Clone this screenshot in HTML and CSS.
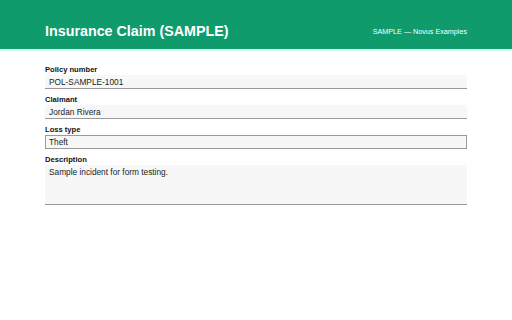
FILE: index.html
```html
<!DOCTYPE html>
<html lang="en">
<head>
    <meta charset="UTF-8">
    <meta name="viewport" content="width=device-width, initial-scale=1.0">
    <title>Insurance Claim (SAMPLE)</title>
    <link rel="stylesheet" href="styles.css">
</head>
<body>
    <header class="topbar">
        <h1>Insurance Claim (SAMPLE)</h1>
        <span class="meta">SAMPLE — Novus Examples</span>
    </header>

    <form class="claim-form">
        <div class="field">
            <label for="policy">Policy number</label>
            <input id="policy" type="text" value="POL-SAMPLE-1001">
        </div>
        <div class="field">
            <label for="claimant">Claimant</label>
            <input id="claimant" type="text" value="Jordan Rivera">
        </div>
        <div class="field">
            <label for="loss">Loss type</label>
            <div class="select-box" id="loss">Theft</div>
        </div>
        <div class="field">
            <label for="desc">Description</label>
            <textarea id="desc">Sample incident for form testing.</textarea>
        </div>
    </form>
</body>
</html>
```

FILE: styles.css
```css
* {
    margin: 0;
    padding: 0;
    box-sizing: border-box;
    font-family: "Liberation Sans", Arial, Helvetica, sans-serif;
}

body {
    background: #fff;
    color: #111;
}

.topbar {
    height: 51px;
    background: #0f9b6b;
    border-bottom: 2px solid #d4fbef;
    display: flex;
    justify-content: space-between;
    align-items: center;
    padding: 12px 45px 0 45px;
}

.topbar h1 {
    color: #fff;
    font-size: 14.3px;
    font-weight: bold;
}

.meta {
    color: #fff;
    font-size: 7.2px;
    margin-top: 2px;
}

.claim-form {
    padding: 13px 45px 0 45px;
    display: flex;
    flex-direction: column;
    gap: 5px;
}

.field {
    display: flex;
    flex-direction: column;
}

.field label {
    font-size: 7.6px;
    font-weight: bold;
    line-height: 10px;
    padding-top: 1px;
}

.field input,
.field textarea,
.select-box {
    width: 100%;
    background: #f7f7f7;
    border: none;
    border-bottom: 1px solid #9a9a9a;
    font-size: 8.3px;
    color: #222;
    padding: 0 4px;
    outline: none;
}

.field input {
    height: 14px;
}

.select-box {
    height: 14px;
    line-height: 12px;
    border: 1px solid #9a9a9a;
    padding: 0 3px;
}

.field textarea {
    height: 40px;
    resize: none;
    padding-top: 2px;
    line-height: 10px;
}
```
